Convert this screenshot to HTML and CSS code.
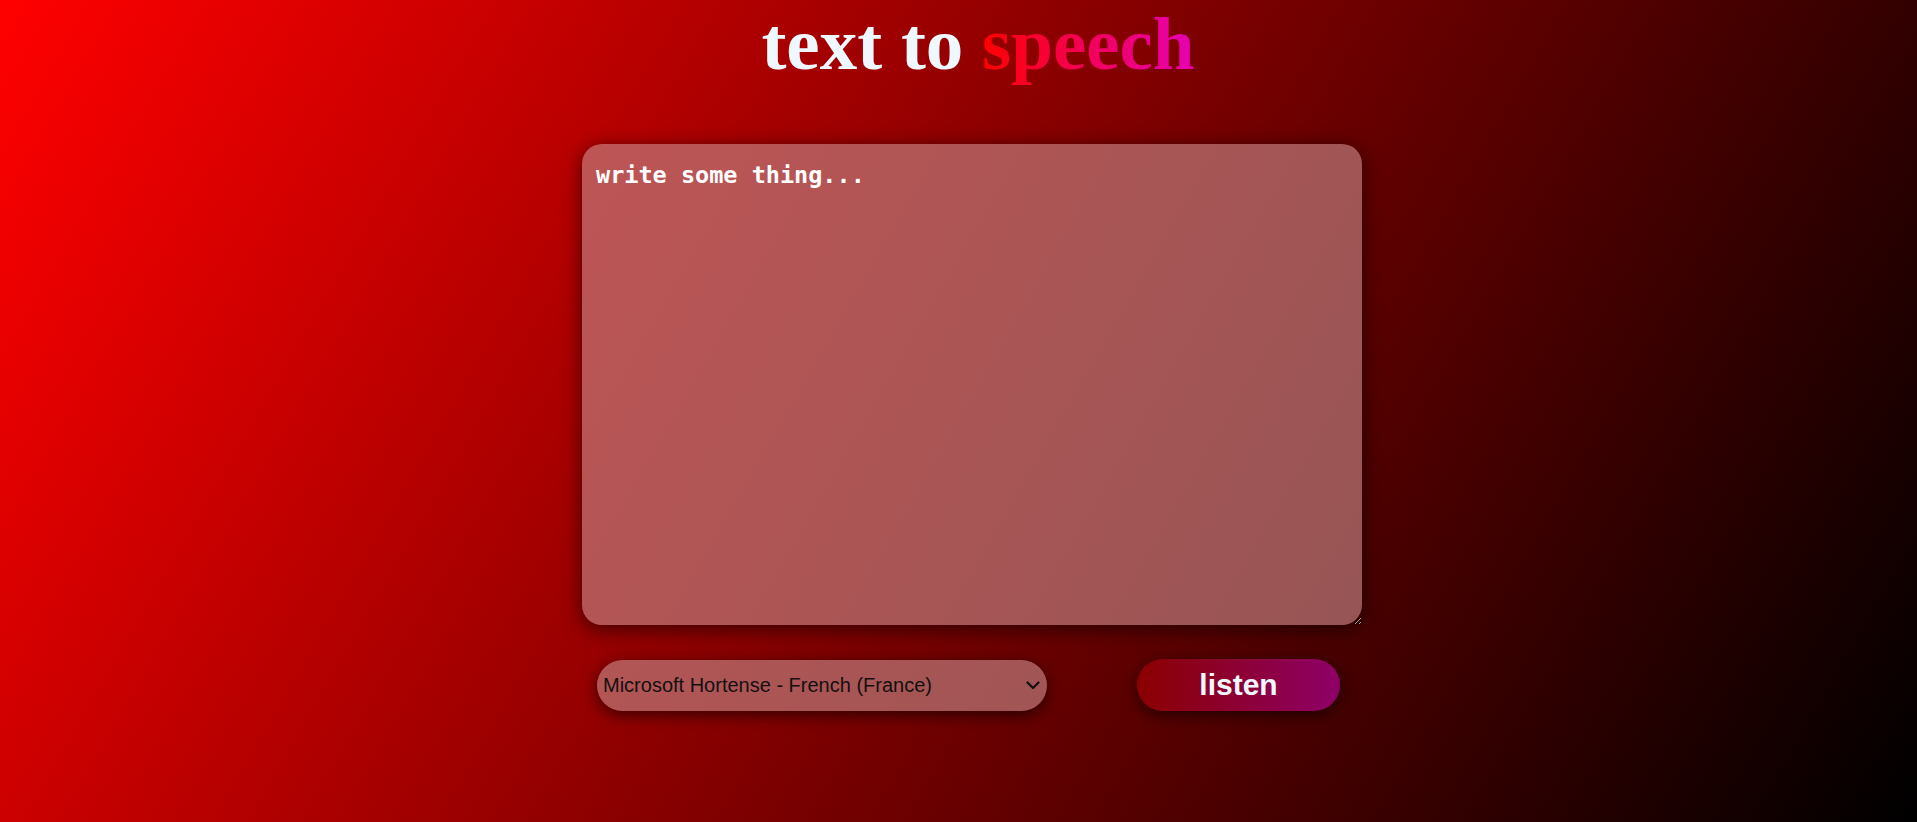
FILE: index.html
```html
<!DOCTYPE html>
<html lang="en">
<head>
<meta charset="utf-8">
<title>text to speech</title>
<link rel="stylesheet" href="styles.css">
</head>
<body>
<main class="app">
  <h1 class="title">text to <span class="accent">speech</span></h1>
  <textarea class="input" placeholder="write some thing..."></textarea>
  <div class="controls">
    <div class="select-wrap">
      <select class="voices">
        <option>Microsoft Hortense - French (France)</option>
      </select>
      <svg class="chevron" width="14" height="9" viewBox="0 0 14 9" aria-hidden="true">
        <path d="M1.5 1.5 L7 7 L12.5 1.5" fill="none" stroke="#111" stroke-width="2.2" stroke-linecap="round" stroke-linejoin="round"/>
      </svg>
    </div>
    <button class="listen" type="button">listen</button>
  </div>
</main>
</body>
</html>
```
FILE: styles.css
```css
html {
  height: 100%;
}
body {
  margin: 0;
  min-height: 100%;
  background: linear-gradient(120deg, #ff0000, #000000);
}
.app {
  box-sizing: border-box;
  width: 100%;
  padding-left: 27px;
  display: flex;
  flex-direction: column;
  align-items: center;
}
.title {
  margin: 0;
  padding-top: 1px;
  padding-left: 12px;
  font-family: "Liberation Serif", "Times New Roman", serif;
  font-weight: bold;
  font-size: 75px;
  color: #f0f8ff;
}
.accent {
  background: linear-gradient(90deg, #ff0000, #e600b4);
  -webkit-background-clip: text;
  background-clip: text;
  color: transparent;
}
.input {
  display: block;
  box-sizing: border-box;
  width: 780px;
  height: 481px;
  margin-top: 57px;
  padding: 17px 14px;
  border: none;
  border-radius: 20px;
  outline: none;
  background: rgba(193, 129, 129, 0.66);
  box-shadow: 0 4px 20px rgba(0, 0, 0, 0.6);
  font-family: "DejaVu Sans Mono", "Liberation Mono", monospace;
  font-weight: bold;
  font-size: 23.5px;
  color: #ffffff;
}
.input::placeholder {
  color: #ffffff;
  opacity: 1;
}
.controls {
  box-sizing: border-box;
  width: 780px;
  margin-top: 34px;
  padding: 0 22px 0 15px;
  display: flex;
  align-items: center;
  justify-content: space-between;
}
.select-wrap {
  position: relative;
  display: flex;
}
.voices {
  -webkit-appearance: none;
  appearance: none;
  box-sizing: border-box;
  width: 450px;
  height: 51px;
  padding: 0 30px 0 6px;
  border: none;
  border-radius: 26px;
  outline: none;
  background-color: rgba(193, 129, 129, 0.66);
  box-shadow: 0 4px 15px rgba(0, 0, 0, 0.6);
  font-family: "Liberation Sans", Arial, sans-serif;
  font-size: 20px;
  color: #141010;
}
.chevron {
  position: absolute;
  right: 7px;
  top: 21px;
  pointer-events: none;
}
.listen {
  box-sizing: border-box;
  width: 203px;
  height: 52px;
  border: none;
  border-radius: 26px;
  background: linear-gradient(90deg, #8b0000, #8e0068);
  box-shadow: 0 4px 15px rgba(0, 0, 0, 0.6);
  font-family: "Liberation Sans", Arial, sans-serif;
  font-weight: bold;
  font-size: 30px;
  color: #f0f8ff;
  cursor: pointer;
}
```
